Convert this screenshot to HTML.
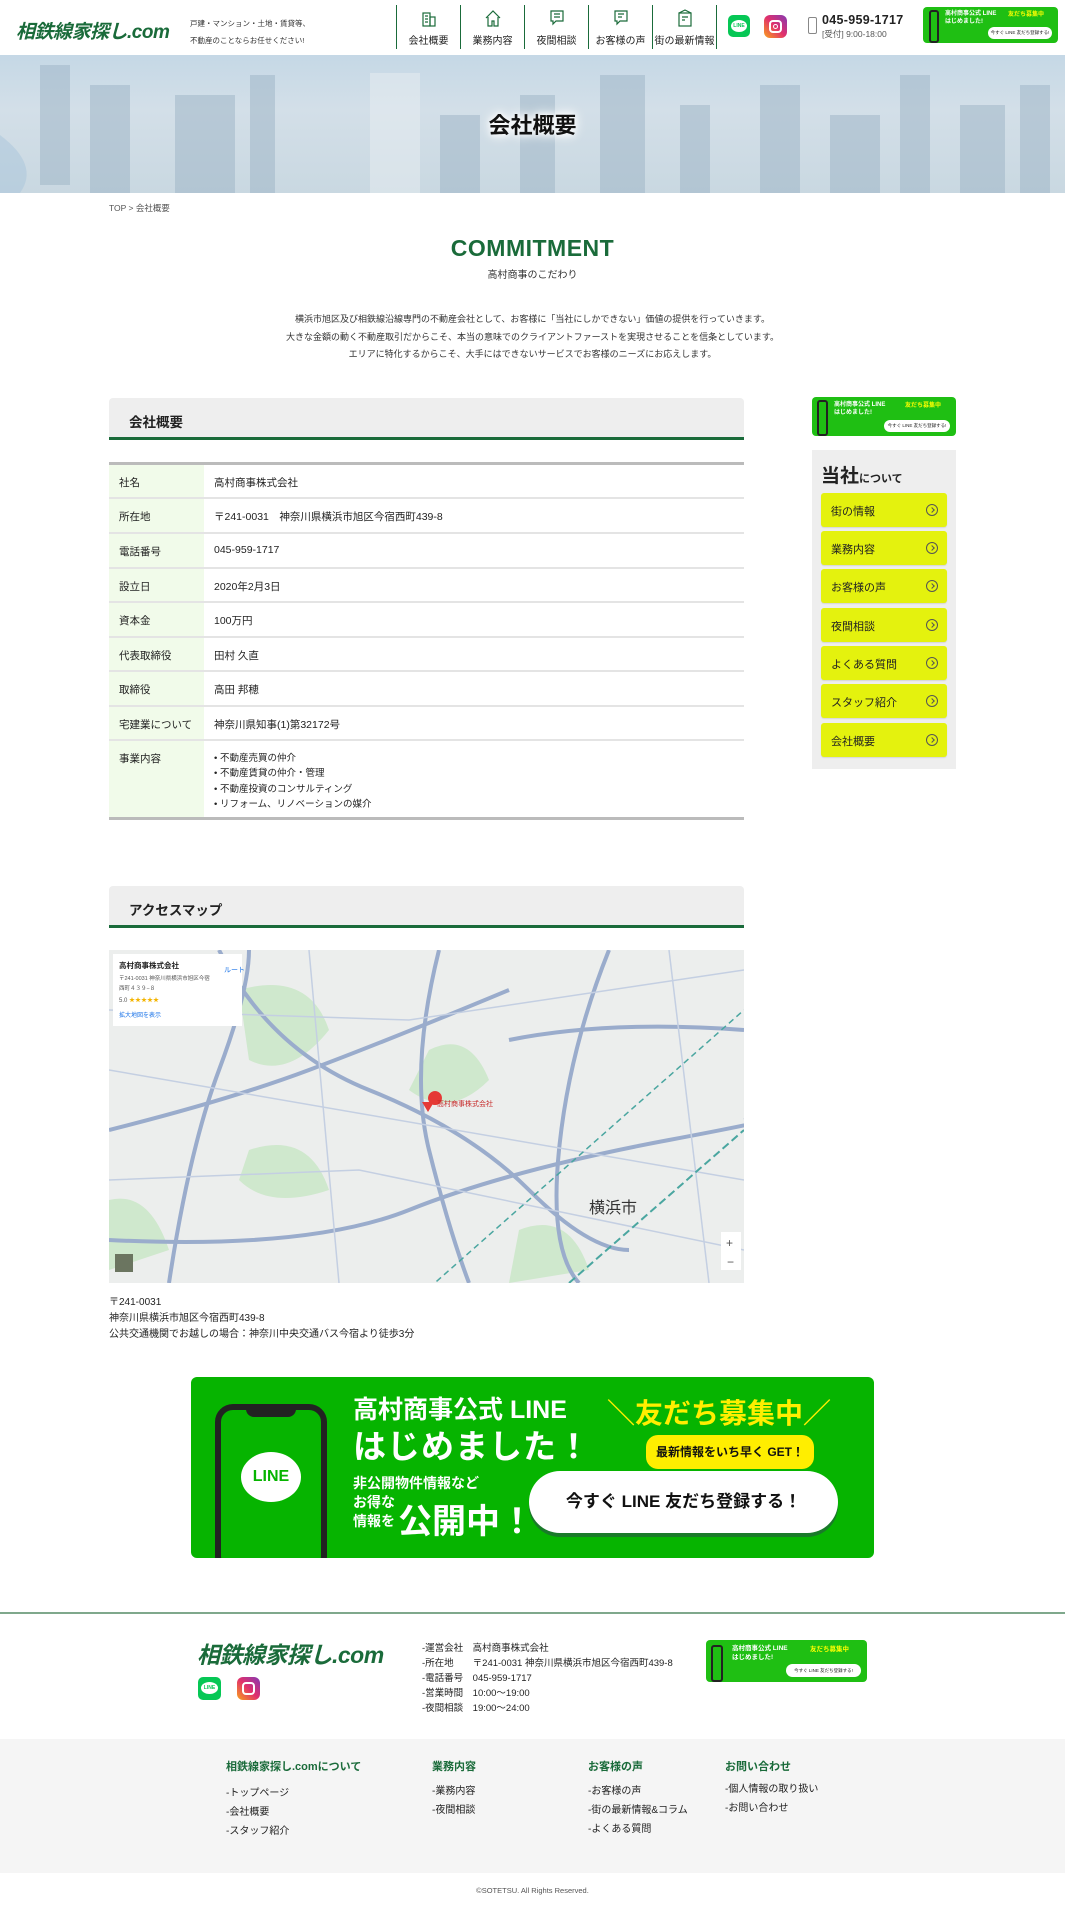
<!DOCTYPE html>
<html><head><meta charset="utf-8"><style>
*{margin:0;padding:0;box-sizing:border-box}
body{width:1065px;height:1920px;position:relative;background:#fff;font-family:"Liberation Sans","Noto Sans CJK JP",sans-serif;color:#222;overflow:hidden}
.a{position:absolute}
.logo{font-style:italic;font-weight:bold;color:#1a6b3a;letter-spacing:-0.5px;font-family:"Liberation Sans","Noto Sans CJK JP",sans-serif;white-space:nowrap}
.nav{top:5px;width:64px;height:44px;border-left:1px solid #1a6b3a;text-align:center;font-size:10px}
.nav svg{display:block;margin:4px auto 5px}
.row{position:absolute;left:109px;width:635px;border-bottom:2px solid #e4e4e4;font-size:10.5px}
.row .l{position:absolute;left:0;top:0;bottom:0;width:95px;background:#f1fbea;padding:10px 0 0 10px}
.row .v{position:absolute;left:105px;top:10px}
.sb{position:absolute;left:821px;width:126px;height:34px;background:#e4f20e;border-radius:3px;font-size:11px;padding:10px 0 0 10px;box-shadow:0 1px 1px rgba(0,0,0,.1)}
.sb:after{content:"";position:absolute;right:9px;top:11px;width:10px;height:10px;border:1px solid #555;border-radius:50%}
.sb:before{content:"";position:absolute;right:13px;top:15px;width:3px;height:3px;border-top:1px solid #555;border-right:1px solid #555;transform:rotate(45deg)}
.head{position:absolute;left:109px;width:635px;height:42px;background:#eee;border-bottom:3px solid #1a6b3a;border-radius:4px 4px 0 0;font-size:13.5px;font-weight:bold;padding:13px 0 0 20px}
.fl{font-size:10px;position:absolute}
.fh{color:#1a6b3a;font-weight:bold;font-size:11px;position:absolute;top:1758px}
.lb{background:#07b53b;border-radius:4px;color:#fff}
</style></head><body>

<!-- header -->
<div class="a logo" style="left:16px;top:17px;font-size:19px">相鉄線家探し.com</div>
<div class="a" style="left:190px;top:15px;font-size:7.5px;line-height:17px;color:#333">戸建・マンション・土地・賃貸等、<br>不動産のことならお任せください!</div>
<div class="a nav" style="left:396px"><svg width="18" height="18" viewBox="0 0 18 18" fill="none" stroke="#1a6b3a" stroke-width="1.2"><rect x="3" y="4" width="7" height="13"/><rect x="10" y="8" width="5" height="9"/><path d="M5 7h3M5 10h3M5 13h3"/></svg>会社概要</div>
<div class="a nav" style="left:460px"><svg width="18" height="18" viewBox="0 0 18 18" fill="none" stroke="#1a6b3a" stroke-width="1.2"><path d="M2 9L9 2l7 7M4 8v9h4v-5h2v5h4V8"/></svg>業務内容</div>
<div class="a nav" style="left:524px"><svg width="18" height="18" viewBox="0 0 18 18" fill="none" stroke="#1a6b3a" stroke-width="1.2"><path d="M3 2h12v10H8l-3 3v-3H3z"/><path d="M6 5h6M6 8h6"/></svg>夜間相談</div>
<div class="a nav" style="left:588px"><svg width="18" height="18" viewBox="0 0 18 18" fill="none" stroke="#1a6b3a" stroke-width="1.2"><path d="M3 2h12v10H8l-3 3v-3H3z"/><path d="M6 5h6M6 8h4"/></svg>お客様の声</div>
<div class="a nav" style="left:652px"><svg width="18" height="18" viewBox="0 0 18 18" fill="none" stroke="#1a6b3a" stroke-width="1.2"><rect x="3" y="4" width="12" height="13"/><path d="M3 4l6-3 6 3M6 8h6M6 11h3"/></svg>街の最新情報</div>
<div class="a" style="left:716px;top:5px;height:44px;border-left:1px solid #1a6b3a"></div>
<div class="a" style="left:728px;top:15px;width:22px;height:22px;background:#06c755;border-radius:5px"><div style="margin:5px 3px;height:12px;background:#fff;border-radius:50%;font-size:5px;color:#06c755;text-align:center;line-height:12px;font-weight:bold">LINE</div></div>
<div class="a" style="left:764px;top:15px;width:23px;height:23px;border-radius:6px;background:linear-gradient(45deg,#f9a21b,#e1306c 50%,#833ab4)"><div style="margin:5px;width:13px;height:13px;border:2px solid #fff;border-radius:4px"><div style="margin:2px;width:5px;height:5px;border:1.5px solid #fff;border-radius:50%"></div></div></div>
<div class="a" style="left:808px;top:17px;width:9px;height:17px;border:1px solid #888;border-radius:2px"></div>
<div class="a" style="left:822px;top:13px;font-size:12.5px;font-weight:bold;letter-spacing:.3px">045-959-1717</div>
<div class="a" style="left:822px;top:28px;font-size:8.5px;color:#555">[受付] 9:00-18:00</div>
<div class="a lb" style="left:923px;top:7px;width:135px;height:36px;background:#1fbf13"><div style="position:absolute;left:6px;top:3px;width:10px;height:33px;border:2px solid #222;border-radius:3px;background:#1fbf13"></div><div style="position:absolute;left:22px;top:3px;font-size:6px;font-weight:bold;line-height:8px">高村商事公式 LINE<br>はじめました!</div><div style="position:absolute;left:85px;top:2px;font-size:6px;color:#ff0;font-weight:bold">友だち募集中</div><div style="position:absolute;left:65px;top:20px;width:64px;height:12px;background:#fff;border-radius:6px;color:#222;font-size:4.5px;text-align:center;line-height:12px">今すぐ LINE 友だち登録する!</div></div>

<!-- hero -->
<div class="a" style="left:0;top:55px;width:1065px;height:138px;background:linear-gradient(180deg,#c5d8e6 0%,#d3dfe8 40%,#c9d8e1 100%);overflow:hidden">
<svg width="1065" height="138" style="position:absolute;left:0;top:0;opacity:.5">
<g fill="#9db4c6"><rect x="40" y="10" width="30" height="120"/><rect x="90" y="30" width="40" height="108"/><rect x="175" y="40" width="60" height="98"/><rect x="250" y="20" width="25" height="118"/><rect x="370" y="18" width="50" height="120" fill="#e8eef2"/><rect x="440" y="60" width="40" height="78"/><rect x="520" y="40" width="35" height="98"/><rect x="600" y="20" width="45" height="118"/><rect x="680" y="50" width="30" height="88"/><rect x="760" y="30" width="40" height="108"/><rect x="830" y="60" width="50" height="78"/><rect x="900" y="20" width="30" height="118"/><rect x="960" y="50" width="45" height="88"/><rect x="1020" y="30" width="30" height="108"/></g>
<path d="M0 80 Q40 110 20 138 L0 138Z" fill="#aac6dc"/></svg>
<div style="position:absolute;left:0;width:1065px;top:53px;text-align:center;font-size:22px;font-weight:bold;color:#111;text-shadow:0 0 6px #fff,0 0 10px #fff,0 0 14px #fff">会社概要</div></div>

<div class="a" style="left:109px;top:202px;font-size:8.5px;color:#555">TOP &gt; 会社概要</div>
<div class="a" style="left:0;width:1065px;top:235px;text-align:center;font-size:23px;font-weight:bold;color:#1a6b3a;letter-spacing:.5px">COMMITMENT</div>
<div class="a" style="left:0;width:1065px;top:266px;text-align:center;font-size:10px;color:#333">高村商事のこだわり</div>
<div class="a" style="left:0;width:1065px;top:311px;text-align:center;font-size:9px;line-height:17.5px;color:#333">横浜市旭区及び相鉄線沿線専門の不動産会社として、お客様に「当社にしかできない」価値の提供を行っていきます。<br>大きな金額の動く不動産取引だからこそ、本当の意味でのクライアントファーストを実現させることを信条としています。<br>エリアに特化するからこそ、大手にはできないサービスでお客様のニーズにお応えします。</div>

<!-- table -->
<div class="head" style="top:398px">会社概要</div>
<div class="a" style="left:109px;top:462px;width:635px;height:3px;background:#bbb"></div>
<div class="row" style="top:465px;height:34px"><div class="l">社名</div><div class="v">高村商事株式会社</div></div>
<div class="row" style="top:499px;height:35px"><div class="l">所在地</div><div class="v">〒241-0031　神奈川県横浜市旭区今宿西町439-8</div></div>
<div class="row" style="top:534px;height:35px"><div class="l">電話番号</div><div class="v">045-959-1717</div></div>
<div class="row" style="top:569px;height:34px"><div class="l">設立日</div><div class="v">2020年2月3日</div></div>
<div class="row" style="top:603px;height:35px"><div class="l">資本金</div><div class="v">100万円</div></div>
<div class="row" style="top:638px;height:34px"><div class="l">代表取締役</div><div class="v">田村 久直</div></div>
<div class="row" style="top:672px;height:35px"><div class="l">取締役</div><div class="v">高田 邦穂</div></div>
<div class="row" style="top:707px;height:34px"><div class="l">宅建業について</div><div class="v">神奈川県知事(1)第32172号</div></div>
<div class="row" style="top:741px;height:79px;border-bottom:3px solid #bbb"><div class="l">事業内容</div><div class="v" style="font-size:9.5px;line-height:15.3px;top:10px">• 不動産売買の仲介<br>• 不動産賃貸の仲介・管理<br>• 不動産投資のコンサルティング<br>• リフォーム、リノベーションの媒介</div></div>

<!-- sidebar -->
<div class="a lb" style="left:812px;top:397px;width:144px;height:39px;background:#1fbf13"><div style="position:absolute;left:5px;top:3px;width:11px;height:36px;border:2px solid #222;border-radius:3px"></div><div style="position:absolute;left:22px;top:4px;font-size:6px;font-weight:bold;line-height:8px">高村商事公式 LINE<br>はじめました!</div><div style="position:absolute;left:93px;top:3px;font-size:6px;color:#ff0;font-weight:bold">友だち募集中</div><div style="position:absolute;left:72px;top:23px;width:66px;height:12px;background:#fff;border-radius:6px;color:#222;font-size:4.5px;text-align:center;line-height:12px">今すぐ LINE 友だち登録する!</div></div>
<div class="a" style="left:812px;top:450px;width:144px;height:319px;background:#eee"></div>
<div class="a" style="left:821px;top:461px;font-weight:bold;font-size:11px"><span style="font-size:19px">当社</span>について</div>
<div class="sb" style="top:493px">街の情報</div>
<div class="sb" style="top:531px">業務内容</div>
<div class="sb" style="top:569px">お客様の声</div>
<div class="sb" style="top:608px">夜間相談</div>
<div class="sb" style="top:646px">よくある質問</div>
<div class="sb" style="top:684px">スタッフ紹介</div>
<div class="sb" style="top:723px">会社概要</div>

<!-- access -->
<div class="head" style="top:886px">アクセスマップ</div>
<div class="a" style="left:109px;top:950px;width:635px;height:333px;background:#eceeed;overflow:hidden">
<svg width="635" height="333">
<g fill="#cfe8cd"><path d="M130 40 Q200 20 220 80 Q180 130 140 110Z"/><path d="M320 100 Q360 80 380 130 Q340 170 300 140Z"/><path d="M140 200 Q200 180 220 240 Q160 260 130 230Z"/><path d="M410 280 Q460 260 480 320 L400 333Z"/><path d="M0 250 Q40 240 60 300 L0 320Z"/></g>
<g fill="none" stroke="#9aaccc" stroke-width="4"><path d="M0 180 Q120 150 200 120 T400 40"/><path d="M110 0 Q160 100 260 140 T420 240 T520 300"/><path d="M330 0 Q300 120 320 200 T360 333"/><path d="M500 0 Q460 100 450 200 T470 333"/><path d="M0 290 Q200 300 300 260 T560 190 T635 170"/><path d="M60 333 Q80 200 110 120 T140 0"/><path d="M400 90 Q500 70 635 80"/></g>
<g fill="none" stroke="#c4cfe2" stroke-width="1.5"><path d="M0 120 L635 230"/><path d="M200 0 L230 333"/><path d="M560 0 L600 333"/><path d="M0 60 L300 70 L635 20"/><path d="M0 230 L250 220 L635 300"/></g>
<path d="M460 333 L635 180" stroke="#4aa6a0" stroke-width="2" stroke-dasharray="8 4" fill="none"/>
<path d="M320 338 L635 60" stroke="#4aa6a0" stroke-width="1.5" stroke-dasharray="6 4" fill="none"/>
<text x="480" y="263" font-size="16" fill="#333" font-family="Liberation Sans,Noto Sans CJK JP,sans-serif">横浜市</text>
<path d="M319 148 a7 7 0 1 1 0 .1 M319 162 L313 152 L325 152Z" fill="#e53935"/>
<text x="328" y="156" font-size="7" fill="#c62828" font-family="Liberation Sans,Noto Sans CJK JP,sans-serif">高村商事株式会社</text>
<rect x="4" y="4" width="129" height="72" fill="#fff"/>
<text x="10" y="18" font-size="7.5" font-weight="bold" fill="#222" font-family="Liberation Sans,Noto Sans CJK JP,sans-serif">高村商事株式会社</text>
<text x="10" y="30" font-size="5.5" fill="#555" font-family="Liberation Sans,Noto Sans CJK JP,sans-serif">〒241-0031 神奈川県横浜市旭区今宿</text>
<text x="10" y="40" font-size="5.5" fill="#555" font-family="Liberation Sans,Noto Sans CJK JP,sans-serif">西町４３９−８</text>
<text x="10" y="52" font-size="6" fill="#555" font-family="Liberation Sans,Noto Sans CJK JP,sans-serif">5.0 <tspan fill="#f4b400">★★★★★</tspan></text>
<text x="10" y="67" font-size="6" fill="#1a73e8" font-family="Liberation Sans,Noto Sans CJK JP,sans-serif">拡大地図を表示</text>
<text x="115" y="22" font-size="7" fill="#1a73e8" font-family="Liberation Sans,Noto Sans CJK JP,sans-serif">ルート</text>
<rect x="612" y="282" width="20" height="38" fill="#fff"/><text x="617" y="297" font-size="12" fill="#555">+</text><text x="618" y="316" font-size="12" fill="#555">−</text>
<rect x="6" y="304" width="18" height="18" fill="#6b7560"/>
</svg></div>
<div class="a" style="left:109px;top:1295px;font-size:10px;line-height:16px">〒241-0031<br>神奈川県横浜市旭区今宿西町439-8<br>公共交通機関でお越しの場合：神奈川中央交通バス今宿より徒歩3分</div>

<!-- big LINE banner -->
<div class="a" style="left:191px;top:1377px;width:683px;height:181px;background:#06b400;border-radius:6px;overflow:hidden;color:#fff;white-space:nowrap">
<div style="position:absolute;left:24px;top:27px;width:112px;height:170px;border:6px solid #222;border-radius:18px;background:#06b400"></div>
<div style="position:absolute;left:55px;top:31px;width:50px;height:9px;background:#222;border-radius:0 0 8px 8px"></div>
<div style="position:absolute;left:50px;top:75px;width:60px;height:50px;background:#fff;border-radius:50%;color:#06b400;font-weight:bold;font-size:16px;text-align:center;line-height:50px">LINE</div>
<div style="position:absolute;left:162px;top:13px;font-size:25px;font-weight:bold">高村商事公式 LINE</div>
<div style="position:absolute;left:162px;top:43px;font-size:33px;font-weight:bold;letter-spacing:1px">はじめました！</div>
<div style="position:absolute;left:162px;top:97px;font-size:14px;font-weight:bold;line-height:19px">非公開物件情報など<br>お得な<br>情報を</div>
<div style="position:absolute;left:207px;top:117px;font-size:34px;font-weight:bold">公開中！</div>
<div style="position:absolute;left:416px;top:15px;font-size:28px;font-weight:bold;color:#ffee00">＼友だち募集中／</div>
<div style="position:absolute;left:455px;top:58px;width:168px;height:34px;background:#ffee00;border-radius:12px;color:#111;font-size:12px;font-weight:bold;text-align:center;line-height:34px">最新情報をいち早く GET！</div>
<div style="position:absolute;left:338px;top:94px;width:309px;height:62px;background:#fff;border-radius:31px;box-shadow:0 4px 0 #1a7a2a;color:#111;font-size:17px;font-weight:bold;text-align:center;line-height:62px">今すぐ LINE 友だち登録する！</div>
</div>

<!-- footer -->
<div class="a" style="left:0;top:1612px;width:1065px;height:2px;background:#7fa88c"></div>
<div class="a logo" style="left:197px;top:1636px;font-size:23px">相鉄線家探し.com</div>
<div class="a" style="left:198px;top:1677px;width:23px;height:23px;background:#06c755;border-radius:5px"><div style="margin:5px 3px;height:12px;background:#fff;border-radius:50%;font-size:5px;color:#06c755;text-align:center;line-height:12px;font-weight:bold">LINE</div></div>
<div class="a" style="left:237px;top:1677px;width:23px;height:23px;border-radius:6px;background:linear-gradient(45deg,#f9a21b,#e1306c 50%,#833ab4)"><div style="margin:5px;width:13px;height:13px;border:2px solid #fff;border-radius:4px"></div></div>
<div class="a" style="left:422px;top:1641px;font-size:9.5px;line-height:15px">-運営会社　高村商事株式会社<br>-所在地　　〒241-0031 神奈川県横浜市旭区今宿西町439-8<br>-電話番号　045-959-1717<br>-営業時間　10:00〜19:00<br>-夜間相談　19:00〜24:00</div>
<div class="a lb" style="left:706px;top:1640px;width:161px;height:42px;background:#1fbf13"><div style="position:absolute;left:5px;top:5px;width:12px;height:37px;border:2px solid #222;border-radius:3px"></div><div style="position:absolute;left:26px;top:4px;font-size:6.5px;font-weight:bold;line-height:9px">高村商事公式 LINE<br>はじめました!</div><div style="position:absolute;left:104px;top:3px;font-size:6.5px;color:#ff0;font-weight:bold">友だち募集中</div><div style="position:absolute;left:80px;top:24px;width:75px;height:13px;background:#fff;border-radius:7px;color:#222;font-size:4.5px;text-align:center;line-height:13px">今すぐ LINE 友だち登録する!</div></div>

<div class="a" style="left:0;top:1739px;width:1065px;height:134px;background:#f5f5f5"></div>
<div class="fh" style="left:226px">相鉄線家探し.comについて</div>
<div class="fh" style="left:432px">業務内容</div>
<div class="fh" style="left:588px">お客様の声</div>
<div class="fh" style="left:725px">お問い合わせ</div>
<div class="fl" style="left:226px;top:1784px;line-height:19px">-トップページ<br>-会社概要<br>-スタッフ紹介</div>
<div class="fl" style="left:432px;top:1782px;line-height:19px">-業務内容<br>-夜間相談</div>
<div class="fl" style="left:588px;top:1782px;line-height:19px">-お客様の声<br>-街の最新情報&amp;コラム<br>-よくある質問</div>
<div class="fl" style="left:725px;top:1780px;line-height:19px">-個人情報の取り扱い<br>-お問い合わせ</div>
<div class="a" style="left:0;width:1065px;top:1886px;text-align:center;font-size:7.5px;color:#555">©SOTETSU. All Rights Reserved.</div>
</body></html>
